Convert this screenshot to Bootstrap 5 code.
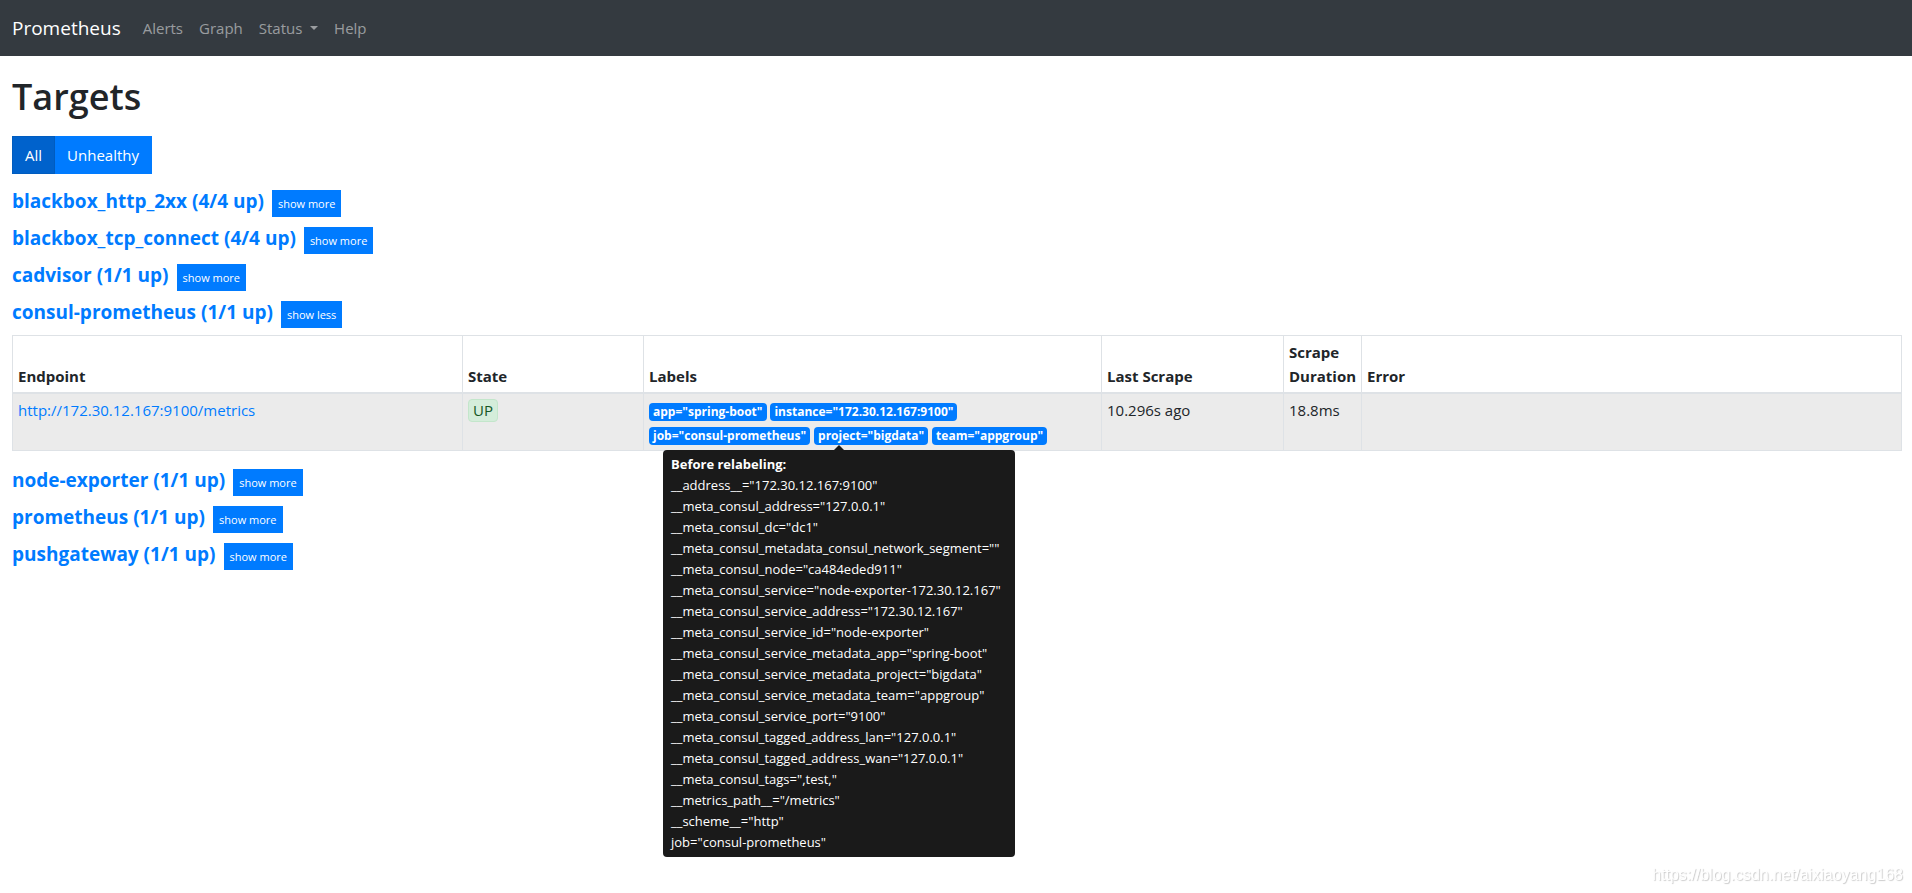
<!DOCTYPE html>
<html lang="en">
<head>
  <meta charset="UTF-8" />
  <meta name="viewport" content="width=device-width, initial-scale=1.0"/>
  <title>Prometheus Targets</title>
  <link href="https://cdn.jsdelivr.net/npm/bootstrap@5.3.2/dist/css/bootstrap.min.css" rel="stylesheet">
  <style>
    body {
      font-family: "Segoe UI", "Open Sans", sans-serif;
      font-size: 15px;
      line-height: 24px;
      color: #212529;
      min-height: 100vh;
    }
    a {
      color: #007bff;
      text-decoration: none;
    }
    .top-bar {
      background: #343a40;
      min-height: 56px;
    }
    .top-bar .navbar-brand {
      font-size: 19px;
      margin-right: 14px;
    }
    .top-bar .nav-link {
      color: rgba(255,255,255,0.5);
    }
    .page {
      padding: 16px 10px 0 12px;
    }
    .page h1 {
      font-size: 36px;
      font-weight: 600;
      line-height: 50px;
      margin-bottom: 14px;
    }
    .btn-target {
      --bs-btn-color: #fff;
      --bs-btn-bg: #007bff;
      --bs-btn-border-color: #007bff;
      --bs-btn-hover-color: #fff;
      --bs-btn-hover-bg: #0069d9;
      --bs-btn-hover-border-color: #0062cc;
      --bs-btn-active-color: #fff;
      --bs-btn-active-bg: #0062cc;
      --bs-btn-active-border-color: #005cbf;
      --bs-btn-font-size: 15px;
      --bs-btn-border-radius: 0;
      line-height: 24px;
    }
    .filters {
      margin-bottom: 15px;
    }
    .job {
      height: 28px;
      margin-bottom: 9px;
    }
    .job-open {
      margin-bottom: 7px;
    }
    .job h2 {
      font-size: 19px;
      line-height: 24px;
      font-weight: 700;
    }
    .btn-toggle {
      --bs-btn-font-size: 11px;
      --bs-btn-padding-x: 5px;
      --bs-btn-padding-y: 4px;
      line-height: 17px;
    }
    .targets {
      --bs-table-color: #212529;
      table-layout: fixed;
      border-color: #dee2e6;
      margin-bottom: 17px;
    }
    .targets > :not(caption) > * > * {
      padding: 4px 5px;
    }
    .targets thead th {
      vertical-align: bottom;
      border-bottom: 2px solid #dee2e6;
    }
    .targets tbody td {
      background: #ebebeb;
    }
    .col-endpoint { width: 450px; }
    .col-state { width: 181px; }
    .col-labels { width: 458px; }
    .col-last { width: 182px; }
    .col-duration { width: 78px; }
    .state-up {
      display: inline-block;
      padding: 0 4px;
      line-height: 21px;
      color: #155724;
      background: #d4edda;
      border: 1px solid #c3e6cb;
      border-radius: 4px;
    }
    .label-badge {
      font-size: 12px;
      line-height: 12px;
      padding: 3px 4px;
      background: #007bff;
      border-radius: 4px;
    }
    /* discovered labels, shown over the page below the Labels cell */
    .relabel-tip {
      --bs-tooltip-max-width: none;
      --bs-tooltip-bg: #1a1a1a;
      --bs-tooltip-opacity: 1;
      position: absolute;
      top: calc(100% - 6px);
      left: 19px;
      min-width: 352px;
      padding: 6px 0 0 !important;
      font-family: inherit;
      font-size: 13px;
      line-height: 21px;
    }
    .relabel-tip .tooltip-arrow {
      position: absolute;
      top: 0 !important;
      left: calc(50% - 6px);
    }
    .relabel-tip .tooltip-inner {
      text-align: left;
      white-space: nowrap;
      border-radius: 4px;
    }
    .blog-mark {
      font-family: "Liberation Sans", Arial, sans-serif;
      font-size: 16px;
      right: 9px;
      bottom: 6px;
      color: #fff;
      text-shadow: 1px 1px 1px #ccc;
    }
  </style>
</head>
<body>

  <nav class="navbar navbar-expand navbar-dark top-bar py-0">
    <div class="container-fluid">
      <a class="navbar-brand" href="#">Prometheus</a>
      <ul class="navbar-nav me-auto">
        <li class="nav-item"><a class="nav-link" href="#">Alerts</a></li>
        <li class="nav-item"><a class="nav-link" href="#">Graph</a></li>
        <li class="nav-item dropdown">
          <a class="nav-link dropdown-toggle" href="#" role="button" data-bs-toggle="dropdown" aria-expanded="false">Status </a>
          <ul class="dropdown-menu">
            <li><a class="dropdown-item" href="#">Targets</a></li>
          </ul>
        </li>
        <li class="nav-item"><a class="nav-link" href="#">Help</a></li>
      </ul>
    </div>
  </nav>

  <main class="page">
    <h1>Targets</h1>
    <div class="d-flex filters">
      <div class="btn-group">
        <button type="button" class="btn btn-target active">All</button>
        <button type="button" class="btn btn-target">Unhealthy</button>
      </div>
    </div>

    <div class="job d-flex align-items-baseline gap-2">
      <h2 class="mb-0"><a href="#">blackbox_http_2xx (4/4 up)</a></h2>
      <button type="button" class="btn btn-target btn-toggle">show more</button>
    </div>
    <div class="job d-flex align-items-baseline gap-2">
      <h2 class="mb-0"><a href="#">blackbox_tcp_connect (4/4 up)</a></h2>
      <button type="button" class="btn btn-target btn-toggle">show more</button>
    </div>
    <div class="job d-flex align-items-baseline gap-2">
      <h2 class="mb-0"><a href="#">cadvisor (1/1 up)</a></h2>
      <button type="button" class="btn btn-target btn-toggle">show more</button>
    </div>
    <div class="job job-open d-flex align-items-baseline gap-2">
      <h2 class="mb-0"><a href="#">consul-prometheus (1/1 up)</a></h2>
      <button type="button" class="btn btn-target btn-toggle">show less</button>
    </div>

    <table class="table table-bordered targets">
      <thead>
        <tr>
          <th class="col-endpoint">Endpoint</th>
          <th class="col-state">State</th>
          <th class="col-labels">Labels</th>
          <th class="col-last">Last Scrape</th>
          <th class="col-duration">Scrape Duration</th>
          <th>Error</th>
        </tr>
      </thead>
      <tbody>
        <tr>
          <td><a href="#">http://172.30.12.167:9100/metrics</a></td>
          <td><span class="state-up">UP</span></td>
          <td class="position-relative">
            <span class="badge label-badge">app="spring-boot"</span>
            <span class="badge label-badge">instance="172.30.12.167:9100"</span>
            <span class="badge label-badge">job="consul-prometheus"</span>
            <span class="badge label-badge">project="bigdata"</span>
            <span class="badge label-badge">team="appgroup"</span>
            <div class="tooltip bs-tooltip-bottom show relabel-tip" role="tooltip">
              <div class="tooltip-arrow"></div>
              <div class="tooltip-inner">
                <b>Before relabeling:</b><br>
                __address__="172.30.12.167:9100"<br>
                __meta_consul_address="127.0.0.1"<br>
                __meta_consul_dc="dc1"<br>
                __meta_consul_metadata_consul_network_segment=""<br>
                __meta_consul_node="ca484eded911"<br>
                __meta_consul_service="node-exporter-172.30.12.167"<br>
                __meta_consul_service_address="172.30.12.167"<br>
                __meta_consul_service_id="node-exporter"<br>
                __meta_consul_service_metadata_app="spring-boot"<br>
                __meta_consul_service_metadata_project="bigdata"<br>
                __meta_consul_service_metadata_team="appgroup"<br>
                __meta_consul_service_port="9100"<br>
                __meta_consul_tagged_address_lan="127.0.0.1"<br>
                __meta_consul_tagged_address_wan="127.0.0.1"<br>
                __meta_consul_tags=",test,"<br>
                __metrics_path__="/metrics"<br>
                __scheme__="http"<br>
                job="consul-prometheus"
              </div>
            </div>
          </td>
          <td>10.296s ago</td>
          <td>18.8ms</td>
          <td></td>
        </tr>
      </tbody>
    </table>

    <div class="job d-flex align-items-baseline gap-2">
      <h2 class="mb-0"><a href="#">node-exporter (1/1 up)</a></h2>
      <button type="button" class="btn btn-target btn-toggle">show more</button>
    </div>
    <div class="job d-flex align-items-baseline gap-2">
      <h2 class="mb-0"><a href="#">prometheus (1/1 up)</a></h2>
      <button type="button" class="btn btn-target btn-toggle">show more</button>
    </div>
    <div class="job d-flex align-items-baseline gap-2">
      <h2 class="mb-0"><a href="#">pushgateway (1/1 up)</a></h2>
      <button type="button" class="btn btn-target btn-toggle">show more</button>
    </div>
  </main>

  <div class="blog-mark position-fixed">https://blog.csdn.net/aixiaoyang168</div>

  <script src="https://cdn.jsdelivr.net/npm/bootstrap@5.3.2/dist/js/bootstrap.bundle.min.js"></script>
</body>
</html>
